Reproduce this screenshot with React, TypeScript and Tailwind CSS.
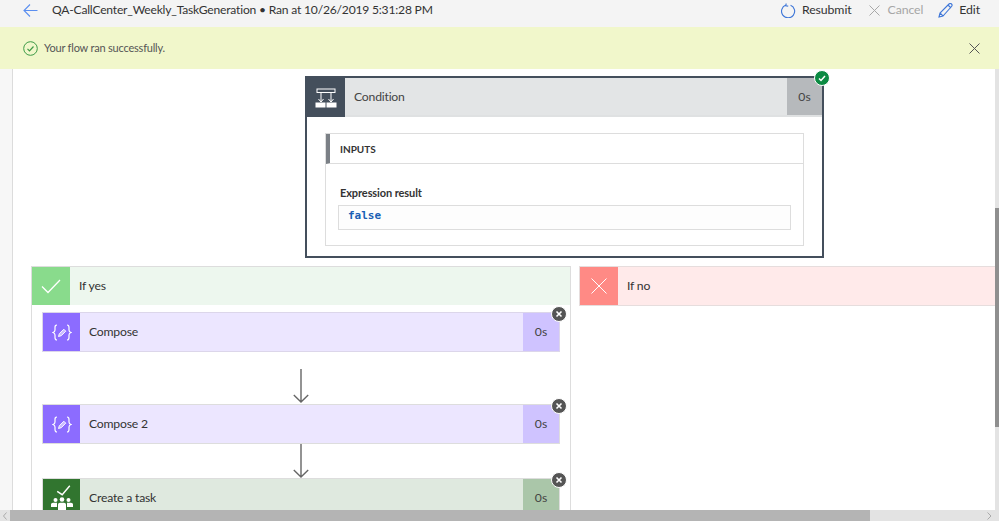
import React from "react";

const font = { fontFamily: 'Lato, "Open Sans", sans-serif' };

function CloseBadge() {
  return (
    <span className="absolute -right-[8px] -top-[7px] flex h-[16px] w-[16px] items-center justify-center rounded-full border border-white bg-[#555555]">
      <svg width="8" height="8" viewBox="0 0 8 8">
        <path d="M1.5 1.5l5 5M6.5 1.5l-5 5" stroke="#fff" strokeWidth="1.6" />
      </svg>
    </span>
  );
}

function ComposeIcon() {
  return (
    <svg width="20" height="17" viewBox="0 0 20 17" fill="none" stroke="#fff" strokeWidth="1.200">
      <path d="M5 1c-2 0-2 1-2 2.500v2.500c0 1.500-.5 2-2 2.500 1.500.5 2 1 2 2.500v2.500c0 1.500 0 2.500 2 2.500" />
      <path d="M15 1c2 0 2 1 2 2.500v2.500c0 1.500.5 2 2 2.500-1.500.5-2 1-2 2.500v2.500c0 1.500 0 2.500-2 2.500" />
      <path d="M6.500 12.500l.8-2.800 4.500-4.500 2 2-4.500 4.500z" fill="#fff" fillOpacity="0.55" strokeWidth="0.900" />
    </svg>
  );
}

function TaskIcon() {
  return (
    <svg width="22" height="26" viewBox="0 0 22 26" fill="#fff">
      <path d="M6.200 6.300l5 3.400 7.600-9" fill="none" stroke="#fff" strokeWidth="1.400" />
      <circle cx="4.500" cy="15" r="2" />
      <circle cx="11" cy="14.500" r="2.300" />
      <circle cx="17.500" cy="15" r="2" />
      <path d="M0 22v-2.500c0-1 1-1.700 2-1.700h4v4.200zM16 17.800h4c1 0 2 .7 2 1.700V22h-6z" />
      <path d="M7 26v-6.500c0-1 1-1.700 2-1.700h4c1 0 2 .7 2 1.700V26z" />
    </svg>
  );
}

function ActionCard({
  title,
  icon,
  iconBg,
  titleBg,
  timeBg,
  border,
}: {
  title: string;
  icon: React.ReactNode;
  iconBg: string;
  titleBg: string;
  timeBg: string;
  border: string;
}) {
  return (
    <div className={`relative flex h-[40px] w-[518px] shrink-0 border ${border}`}>
      <div className={`flex w-[37px] items-center justify-center ${iconBg}`}>{icon}</div>
      <div className={`flex flex-1 items-center pl-[9px] pt-[1px] text-[12.200px] tracking-[-0.2px] text-[#333333] ${titleBg}`}>{title}</div>
      <div className={`flex w-[36px] items-center justify-center pt-[1px] text-[12.200px] text-[#444444] ${timeBg}`}>0s</div>
      <CloseBadge />
    </div>
  );
}

function Arrow({ top, length }: { top: string; length: number }) {
  return (
    <div className={`flex w-[518px] justify-center ${top}`}>
      <svg width="16" height={length} viewBox={`0 0 16 ${length}`} fill="none" stroke="#666666" strokeWidth="1.400">
        <path d={`M8 0V${length - 1}M.8 ${length - 8}L8 ${length - 1}l7.200-7`} />
      </svg>
    </div>
  );
}

export default function App() {
  return (
    <div className="flex h-[521px] w-[999px] flex-col overflow-hidden bg-white" style={font}>
      {/* command bar */}
      <div className="flex h-[27px] shrink-0 items-center bg-[#f4f4f4] pb-[6px] text-[#333333]">
        <svg className="ml-[23px]" width="15" height="13" viewBox="0 0 15 13" fill="none" stroke="#5b8ff0" strokeWidth="1.100">
          <path d="M14.500 6.500H1M7 .5l-6 6 6 6" />
        </svg>
        <span className="ml-[14px] text-[12.100px] tracking-[-0.2px]">
          QA-CallCenter_Weekly_TaskGeneration • Ran at 10/26/2019 5:31:28 PM
        </span>
        <div className="ml-auto flex items-center pr-[19px] text-[12.300px] tracking-[-0.1px]">
          <svg width="15" height="15" viewBox="0 0 16 16" fill="none" stroke="#3f77d8" strokeWidth="1.200">
            <path d="M5.200 2.200a7 7 0 1 0 5 .1M5.500 .5l-.3 2.400 2.500.4" />
          </svg>
          <span className="ml-[6px]">Resubmit</span>
          <svg className="ml-[17px]" width="11" height="11" viewBox="0 0 11 11" fill="none" stroke="#a8a8a8" strokeWidth="1">
            <path d="M.5.5l10 10M10.500.5l-10 10" />
          </svg>
          <span className="ml-[8px] text-[#a6a6a6]">Cancel</span>
          <svg className="ml-[15px]" width="15" height="15" viewBox="0 0 15 15" fill="none" stroke="#3f77d8" strokeWidth="1.100">
            <path d="M1 14l1-4L11 1c.8-.7 1.800-.7 2.500 0s.7 1.700 0 2.500L5 13zM2 10l3 3M10 2l3 3" />
          </svg>
          <span className="ml-[6px]">Edit</span>
        </div>
      </div>

      {/* success banner */}
      <div className="flex h-[42px] shrink-0 items-center bg-[#f1f7cb] text-[11px] tracking-[-0.2px] text-[#555555]">
        <svg className="ml-[23px]" width="15" height="15" viewBox="0 0 15 15" fill="none" stroke="#3c9a46" strokeWidth="1">
          <circle cx="7.500" cy="7.500" r="6.800" />
          <path d="M4.500 7.800l2 2 4-4.300" strokeWidth="1.200" />
        </svg>
        <span className="ml-[6px] pt-[1px]">Your flow ran successfully.</span>
        <svg className="ml-auto mr-[19px]" width="11" height="11" viewBox="0 0 11 11" fill="none" stroke="#555555" strokeWidth="1">
          <path d="M.5.5l10 10M10.500.5l-10 10" />
        </svg>
      </div>

      <div className="flex min-h-0 flex-1">
        <div className="w-[13px] shrink-0 border-r border-[#dcdcdc] bg-[#f7f7f7]" />

        {/* canvas */}
        <div className="min-w-0 flex-1 overflow-hidden pt-[7px]">
          <div className="relative ml-[292px] w-[519px] border-2 border-[#444f5c]">
            <div className="flex h-[39px] border-b-2 border-[#dfe1e2] bg-[#e3e5e6]">
              <div className="-mb-[2px] flex w-[38px] items-center justify-center bg-[#444f5c]">
                <svg width="22" height="20" viewBox="0 0 22 20" fill="none" stroke="#fff" strokeWidth="1">
                  <rect x="2" y="1" width="18" height="3.500" />
                  <path d="M6 4.500V14M16 4.500V14M3.500 11l2.500 3 2.500-3M13.500 11l2.500 3 2.500-3" />
                  <rect x="1" y="15" width="9" height="4" fill="#fff" />
                  <rect x="12" y="15" width="9" height="4" fill="#fff" />
                </svg>
              </div>
              <div className="flex flex-1 items-center pl-[9px] pt-[2px] text-[12.200px] tracking-[-0.2px] text-[#444444]">Condition</div>
              <div className="flex w-[35px] items-center justify-center bg-[#b6b9bc] pt-[2px] text-[12.200px] text-[#444444]">0s</div>
            </div>
            <div className="px-[18px] pb-[10px] pt-[16px]">
              <div className="h-[113px] border border-[#dddddd]">
                <div className="flex h-[30px] items-center border-b border-l-4 border-[#dddddd] border-l-[#7b8086] pl-[10px] pt-[2px] text-[10px] font-bold text-[#333333]">
                  INPUTS
                </div>
                <div className="px-[12px] pt-[21px]">
                  <div className="pl-[2px] text-[11px] font-bold leading-[16px] tracking-[-0.1px] text-[#333333]">Expression result</div>
                  <div className="mt-[4px] h-[25px] w-[453px] border border-[#dddddd] bg-[#fdfdfd] pl-[9px] font-['DejaVu_Sans_Mono',monospace] text-[11px] font-bold leading-[19px] text-[#1a5fb4]">
                    false
                  </div>
                </div>
              </div>
            </div>
            <span className="absolute -right-[8px] -top-[8px] flex h-[16px] w-[16px] items-center justify-center rounded-full border border-white bg-[#0b8a42]">
              <svg width="8" height="7" viewBox="0 0 8 7" fill="none" stroke="#fff" strokeWidth="1.500">
                <path d="M1 3.500l2 2 4-4.500" />
              </svg>
            </span>
          </div>

          {/* branches */}
          <div className="ml-[18px] mt-[8px] flex items-start gap-[8px]">
            <div className="h-[300px] w-[540px] shrink-0 border border-[#dddddd]">
              <div className="flex h-[38px] bg-[#edf7ee]">
                <div className="flex w-[38px] items-center justify-center bg-[#89db8c]">
                  <svg width="20" height="15" viewBox="0 0 20 15" fill="none" stroke="#fff" strokeWidth="1.300">
                    <path d="M1 7.500l6 6L19 1" />
                  </svg>
                </div>
                <div className="flex items-center pl-[9px] pt-[1px] text-[12.200px] tracking-[-0.2px] text-[#333333]">If yes</div>
              </div>
              <div className="pl-[10px] pt-[7px]">
                <ActionCard title="Compose" icon={<ComposeIcon />} iconBg="bg-[#8c6cff]" titleBg="bg-[#ece6ff]" timeBg="bg-[#cfc3ff]" border="border-[#dcd6ea]" />
                <div className="pb-[1px]">
                  <Arrow top="pt-[17px]" length={34} />
                </div>
                <ActionCard title="Compose 2" icon={<ComposeIcon />} iconBg="bg-[#8c6cff]" titleBg="bg-[#ece6ff]" timeBg="bg-[#cfc3ff]" border="border-[#dddddd]" />
                <Arrow top="pt-0" length={34} />
                <ActionCard title="Create a task" icon={<TaskIcon />} iconBg="bg-[#31752f]" titleBg="bg-[#dfe9df]" timeBg="bg-[#aac6a9]" border="border-[#dddddd]" />
              </div>
            </div>

            <div className="flex h-[40px] w-[500px] shrink-0 border border-[#e6dddd] bg-[#ffeaea]">
              <div className="flex w-[38px] items-center justify-center bg-[#ff8a85]">
                <svg width="16" height="16" viewBox="0 0 16 16" fill="none" stroke="#fff" strokeWidth="1">
                  <path d="M.5.5l15 15M15.500.5l-15 15" />
                </svg>
              </div>
              <div className="flex items-center pl-[9px] pt-[1px] text-[12.200px] tracking-[-0.2px] text-[#333333]">If no</div>
            </div>
          </div>
        </div>

        {/* vertical scrollbar */}
        <div className="flex w-[4px] shrink-0 flex-col bg-[#e3e3e3]">
          <div className="h-[139px]" />
          <div className="h-[219px] bg-[#8f8f8f]" />
        </div>
      </div>

      {/* horizontal scrollbar */}
      <div className="flex h-[11px] shrink-0 items-center bg-[#e3e3e3]">
        <div className="flex w-[10px] justify-center">
          <svg width="4" height="8" viewBox="0 0 4 8" fill="none" stroke="#aaaaaa">
            <path d="M3.500.5L.5 4l3 3.500" />
          </svg>
        </div>
        <div className="h-full w-[860px] bg-[#b4b4b4]" />
        <div className="ml-auto mr-[7px]">
          <svg width="5" height="8" viewBox="0 0 5 8" fill="none" stroke="#aaaaaa">
            <path d="M.5.5l3.500 3.500-3.500 3.500" />
          </svg>
        </div>
      </div>
    </div>
  );
}
